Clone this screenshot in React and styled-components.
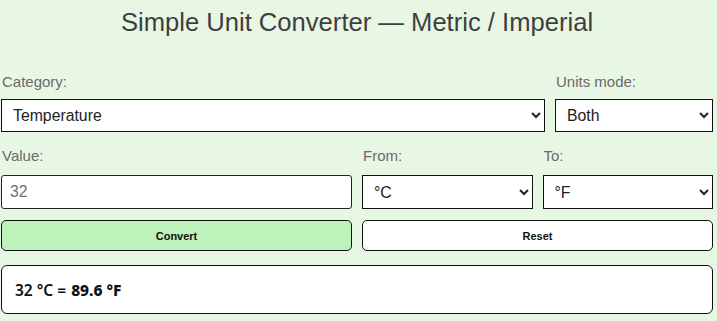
import React, { useState } from 'react'
import styled, { createGlobalStyle } from 'styled-components'

const GlobalStyle = createGlobalStyle`
  html, body {
    margin: 0;
    padding: 0;
    background: #e8f7e4;
  }
  body {
    font-family: "Liberation Sans", Arial, sans-serif;
    color: #222;
  }
`

const Page = styled.div`
  width: 712px;
  padding: 7px 0 0 1px;
  box-sizing: content-box;
`

const Title = styled.h1`
  margin: 0 0 36px;
  font-size: 25.6px;
  line-height: 30px;
  font-weight: normal;
  text-align: center;
  color: #3f3f3f;
`

const Row = styled.div`
  display: grid;
  grid-template-columns: ${p => p.$cols};
  column-gap: 10px;
  margin-bottom: ${p => p.$gap || 12}px;
`

const Field = styled.div`
  display: flex;
  flex-direction: column;
  min-width: 0;
`

const Label = styled.label`
  font-size: 15px;
  line-height: 18px;
  color: #6a6a6a;
  margin: 0 0 ${p => p.$space || 8}px 1px;
`

const Select = styled.select`
  height: ${p => p.$h || 33}px;
  width: 100%;
  box-sizing: border-box;
  border: 1px solid #111;
  border-radius: 0;
  background: #fff;
  padding: 0 6px 0 7px;
  font-family: "Liberation Sans", Arial, sans-serif;
  font-size: 15.8px;
  color: #222;
  outline: none;
`

const Input = styled.input`
  height: 34px;
  width: 100%;
  box-sizing: border-box;
  border: 1px solid #222;
  border-radius: 3px;
  background: #fff;
  padding: 0 8px;
  font-family: "Liberation Sans", Arial, sans-serif;
  font-size: 15.8px;
  color: #707070;
  outline: none;
`

const Button = styled.button`
  height: 31px;
  box-sizing: border-box;
  border: 1px solid #111;
  border-radius: 5px;
  background: ${p => (p.$primary ? '#bdf2bb' : '#fff')};
  font-family: "Liberation Sans", Arial, sans-serif;
  font-size: 11px;
  font-weight: bold;
  color: #111;
  cursor: pointer;
`

const Result = styled.div`
  height: 49px;
  box-sizing: border-box;
  border: 1px solid #111;
  border-radius: 6px;
  background: #fff;
  display: flex;
  align-items: center;
  padding: 1px 0 0 13px;
  font-family: "Noto Sans", "Open Sans", sans-serif;
  font-size: 15.5px;
  font-weight: 600;
  color: #111;

  strong {
    font-weight: 800;
    margin-left: 5px;
  }
`

export default function App() {
  const [value, setValue] = useState('32')

  return (
    <>
      <GlobalStyle />
      <Page>
        <Title>Simple Unit Converter — Metric / Imperial</Title>

        <Row $cols="1fr 158px" $gap={15}>
          <Field>
            <Label>Category:</Label>
            <Select defaultValue="Temperature">
              <option>Length</option>
              <option>Weight</option>
              <option>Temperature</option>
              <option>Volume</option>
            </Select>
          </Field>
          <Field>
            <Label>Units mode:</Label>
            <Select defaultValue="Both">
              <option>Both</option>
              <option>Metric</option>
              <option>Imperial</option>
            </Select>
          </Field>
        </Row>

        <Row $cols="351px 1fr 1fr" $gap={11}>
          <Field>
            <Label $space={10}>Value:</Label>
            <Input value={value} onChange={e => setValue(e.target.value)} />
          </Field>
          <Field>
            <Label $space={10}>From:</Label>
            <Select defaultValue="°C" $h={34}>
              <option>°C</option>
              <option>°F</option>
              <option>K</option>
            </Select>
          </Field>
          <Field>
            <Label $space={10}>To:</Label>
            <Select defaultValue="°F" $h={34}>
              <option>°C</option>
              <option>°F</option>
              <option>K</option>
            </Select>
          </Field>
        </Row>

        <Row $cols="1fr 1fr" $gap={14}>
          <Button $primary>Convert</Button>
          <Button>Reset</Button>
        </Row>

        <Result>
          32 °C = <strong>89.6 °F</strong>
        </Result>
      </Page>
    </>
  )
}
